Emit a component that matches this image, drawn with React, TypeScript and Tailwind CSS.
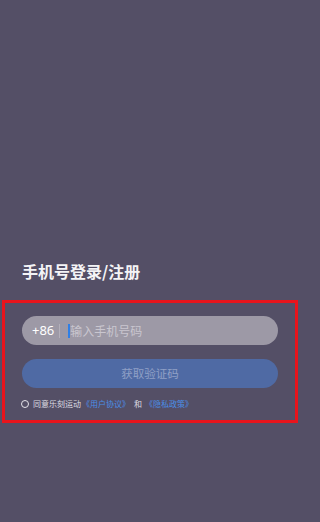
import React from "react";

export default function App() {
  const font = { fontFamily: '"Noto Sans CJK SC", "Noto Sans", sans-serif' };
  return (
    <div className="w-full h-[522px] bg-[#544f66] overflow-hidden" style={font}>
      <div className="w-[300px] h-[522px] flex flex-col">
        <div className="pt-[261px] pl-[22px] h-[300px]">
          <h1 className="text-[16px] leading-[20px] font-bold text-[#f4f4f6]">
            手机号登录/注册
          </h1>
        </div>
        <div className="mx-[2px] h-[123px] border-[3px] border-[#e8141c] px-[17px] pt-[13px] flex flex-col">
          <div className="h-[29px] rounded-full bg-[#9d99a6] flex items-center pl-[10px]">
            <span
              className="text-[13px] leading-none text-white"
              style={{ fontFamily: '"Noto Sans", sans-serif' }}
            >
              +86
            </span>
            <span className="ml-[5px] w-px h-[14px] bg-[#b3afba]" />
            <span className="ml-[8px] w-[2px] h-[14px] bg-[#2f7fe6]" />
            <span className="text-[12px] leading-none text-[#c9c6cf]">
              输入手机号码
            </span>
          </div>
          <div className="mt-[14px] h-[29px] rounded-full bg-[#4f6aa4] flex items-center justify-center">
            <span className="text-[11.5px] leading-none text-[#8fa0c6]">
              获取验证码
            </span>
          </div>
          <div className="mt-[12px] flex items-center text-[8px] leading-none">
            <span className="w-[8px] h-[8px] rounded-full border-[1.5px] border-[#e6e4ea] ml-[-1px]" />
            <span className="ml-[4px] text-[#dddbe2]">同意乐刻运动</span>
            <span className="ml-[1px] text-[#4a8ee6]">《用户协议》</span>
            <span className="ml-[4px] text-[#dddbe2]">和</span>
            <span className="ml-[3px] text-[#4a8ee6]">《隐私政策》</span>
          </div>
        </div>
        <div className="flex-1" />
      </div>
    </div>
  );
}
